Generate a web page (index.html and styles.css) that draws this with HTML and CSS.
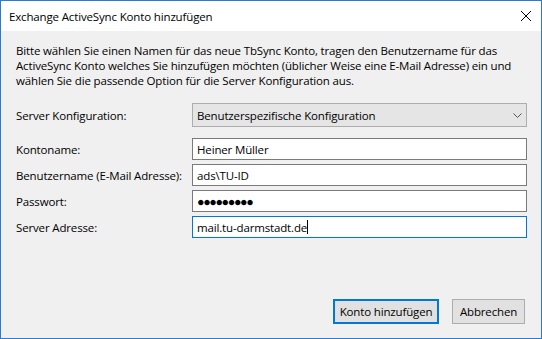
FILE: index.html
```html
<!DOCTYPE html>
<html lang="de">
<head>
<meta charset="utf-8">
<title>Exchange ActiveSync Konto hinzufügen</title>
<link rel="stylesheet" href="styles.css">
</head>
<body>
<div class="window">
  <div class="titlebar">
    <span class="title">Exchange ActiveSync Konto hinzufügen</span>
    <svg class="close" width="12" height="12" viewBox="0 0 12 12"><path d="M1 1 L11 11 M11 1 L1 11" stroke="#000" stroke-width="1" fill="none"/></svg>
  </div>
  <div class="content">
    <p class="desc">Bitte wählen Sie einen Namen für das neue TbSync Konto, tragen den Benutzername für das<br>ActiveSync Konto welches Sie hinzufügen möchten (üblicher Weise eine E-Mail Adresse) ein und<br>wählen Sie die passende Option für die Server Konfiguration aus.</p>
    <div class="form">
      <div class="row row-select">
        <span class="label">Server Konfiguration:</span>
        <div class="select"><span>Benutzerspezifische Konfiguration</span>
          <svg class="chev" width="9" height="5" viewBox="0 0 9 5"><path d="M0.5 0.5 L4.5 4.5 L8.5 0.5" stroke="#555" stroke-width="1" fill="none"/></svg>
        </div>
      </div>
      <div class="row row-first">
        <span class="label">Kontoname:</span>
        <div class="input">Heiner Müller</div>
      </div>
      <div class="row">
        <span class="label">Benutzername (E-Mail Adresse):</span>
        <div class="input">ads\TU-ID</div>
      </div>
      <div class="row">
        <span class="label">Passwort:</span>
        <div class="input pw">●●●●●●●●●</div>
      </div>
      <div class="row">
        <span class="label">Server Adresse:</span>
        <div class="input focus">mail.tu-darmstadt.de<span class="caret"></span></div>
      </div>
    </div>
    <div class="buttons">
      <button class="btn default">Konto hinzufügen</button>
      <button class="btn">Abbrechen</button>
    </div>
  </div>
</div>
</body>
</html>
```
FILE: styles.css
```css
html, body {
  margin: 0;
  padding: 0;
  background: #ffffff;
}
.window {
  width: 542px;
  height: 339px;
  box-sizing: border-box;
  border: 1px solid #2b7bd6;
  display: flex;
  flex-direction: column;
  font-family: "Open Sans", "Noto Sans", sans-serif;
  font-size: 11.5px;
  color: #000;
  letter-spacing: -0.15px;
}
.titlebar {
  height: 30px;
  flex: none;
  background: #fff;
  display: flex;
  align-items: center;
  justify-content: space-between;
  padding: 0 9px 0 8px;
}
.title {
  font-size: 11.5px;
}
.close {
  display: block;
}
.content {
  flex: 1;
  background: #f0f0f0;
  padding: 12px 15px 0 15px;
  display: flex;
  flex-direction: column;
}
.desc {
  margin: 0;
  line-height: 15px;
}
.form {
  margin-top: 15px;
  display: flex;
  flex-direction: column;
  gap: 4px;
}
.row {
  display: grid;
  grid-template-columns: 176px 335px;
  align-items: center;
}
.row-first {
  margin-top: 7px;
}
.select {
  height: 24px;
  box-sizing: border-box;
  border: 1px solid #adadad;
  background: #e5e5e5;
  display: flex;
  align-items: center;
  justify-content: space-between;
  padding: 0 4px 0 4px;
}
.chev {
  display: block;
}
.input {
  height: 22px;
  box-sizing: border-box;
  border: 1px solid #7a7a7a;
  background: #fff;
  display: flex;
  align-items: center;
  padding: 0 4px;
  white-space: nowrap;
}
.input.focus {
  border-color: #0078d7;
}
.pw {
  font-size: 12.5px;
  letter-spacing: -1.4px;
}
.caret {
  display: inline-block;
  width: 0;
  height: 14px;
  border-left: 1px solid #000;
}
.buttons {
  margin-top: auto;
  margin-bottom: 14px;
  display: flex;
  justify-content: flex-end;
  gap: 13px;
  padding-right: 1px;
}
.btn {
  font: inherit;
  letter-spacing: inherit;
  color: #000;
  height: 25px;
  box-sizing: border-box;
  background: #e1e1e1;
  border: 1px solid #adadad;
  padding: 0;
  margin: 0;
  white-space: nowrap;
}
.btn.default {
  border: 2px solid #0078d7;
  width: 106px;
}
.btn:not(.default) {
  width: 73px;
}
```
